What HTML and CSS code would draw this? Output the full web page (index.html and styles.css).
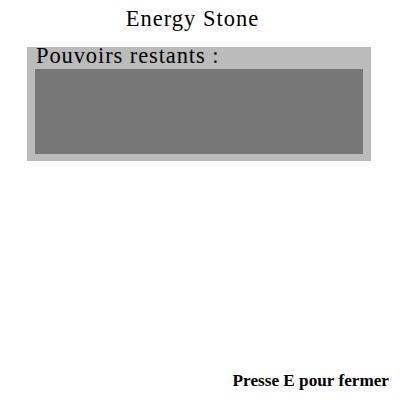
FILE: index.html
```html
<!DOCTYPE html>
<html>
<head>
<meta charset="utf-8">
<link rel="stylesheet" href="styles.css">
</head>
<body>
<div class="screen">
  <h1 class="title">Energy Stone</h1>
  <div class="panel">
    <div class="label">Pouvoirs restants :</div>
    <div class="slots"></div>
  </div>
  <div class="spacer"></div>
  <div class="hint">Presse E pour fermer</div>
</div>
</body>
</html>
```
FILE: styles.css
```css
html, body {
  margin: 0;
  padding: 0;
  background: #ffffff;
}
.screen {
  width: 400px;
  height: 400px;
  display: flex;
  flex-direction: column;
  font-family: "Liberation Serif", "Times New Roman", serif;
  color: #000;
}
.title {
  margin: 0;
  padding-top: 6px;
  height: 47px;
  box-sizing: border-box;
  font-size: 22.5px;
  font-weight: normal;
  line-height: 25px;
  letter-spacing: 1px;
  text-align: center;
  width: 385px;
}
.panel {
  margin-left: 27px;
  width: 344px;
  height: 114px;
  box-sizing: border-box;
  background: #bbbbbb;
  padding: 0 8px 7px 8px;
  display: flex;
  flex-direction: column;
}
.label {
  font-size: 22.5px;
  line-height: 17px;
  letter-spacing: 0.9px;
  padding-left: 1px;
  margin-bottom: 5px;
  white-space: nowrap;
}
.slots {
  flex: 1;
  background: #777777;
}
.spacer {
  flex: 1;
}
.hint {
  align-self: flex-end;
  margin-right: 11px;
  margin-bottom: 10px;
  font-size: 17.2px;
  font-weight: bold;
  line-height: 18px;
}
```
